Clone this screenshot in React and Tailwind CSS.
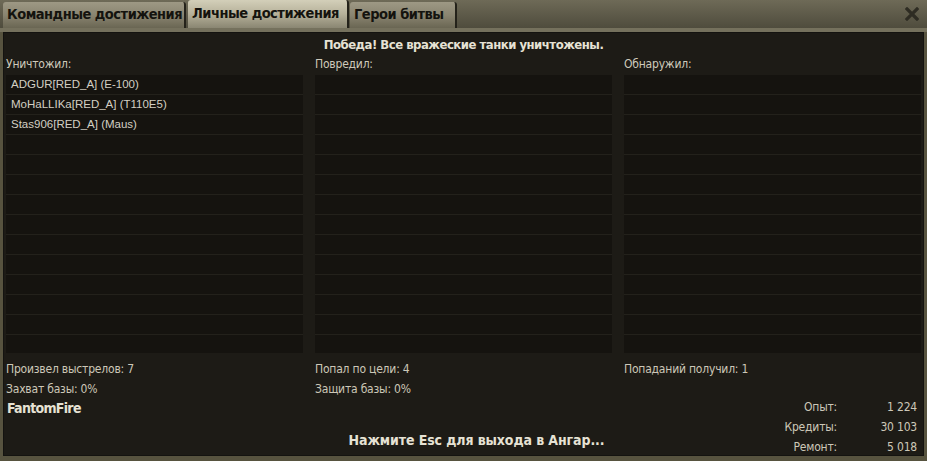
import React from "react";

const narrow = { fontFamily: '"Liberation Sans Narrow", "DejaVu Sans Condensed", "Roboto", sans-serif' };
const plain = { fontFamily: '"Liberation Sans", Arial, sans-serif' };

function ListBox({ items }) {
  const rows = Array.from({ length: 14 }, (_, i) => items[i] || "");
  return (
    <div className="h-[278px] shrink-0 overflow-hidden bg-[#14120e] flex flex-col">
      {rows.map((t, i) => (
        <div
          key={i}
          className="h-[20px] shrink-0 border-b border-[#23211b] bg-[#15130f] pl-[5px] text-[11.5px] leading-[19px] text-[#d3cfc3]"
          style={plain}
        >
          {t}
        </div>
      ))}
    </div>
  );
}

export default function App() {
  const tabBase =
    "shrink-0 px-[4px] flex items-center whitespace-nowrap text-[14.5px] tracking-[-0.5px] font-bold text-[#14130e] border-r-2 border-[#24221a] rounded-t-[3px]";
  const inactive = "h-[26px] bg-gradient-to-b from-[#9d9884] via-[#8a8571] to-[#6a6653]";
  return (
    <div className="w-[927px] h-[461px] bg-[#57533f] flex flex-col overflow-hidden" style={narrow}>
      {/* tab bar */}
      <div className="h-[28px] shrink-0 flex items-end bg-gradient-to-b from-[#6e6a57] to-[#4f4c3d] pl-[3px]">
        <div className={`${tabBase} ${inactive} w-[183px]`}>Командные достижения</div>
        <div className={`${tabBase} ml-[2px] w-[161px] h-[28px] bg-gradient-to-b from-[#d3cfb9] via-[#b6b19a] to-[#8a8672]`}>
          Личные достижения
        </div>
        <div className={`${tabBase} ${inactive} ml-[1px] w-[107px]`}>Герои битвы</div>
        <div className="flex-1" />
        <div className="self-center mr-[8px] mb-[1px]">
          <svg width="14" height="14" viewBox="0 0 14 14">
            <path d="M2 2 L12 12 M12 2 L2 12" stroke="#2e2c23" strokeWidth="3.2" strokeLinecap="square" />
          </svg>
        </div>
      </div>
      <div className="h-[4px] shrink-0 bg-[#75715d]" />
      {/* panel */}
      <div className="mx-[3px] mb-[5px] flex-1 min-h-0 bg-[#1d1b16] border border-[#141310] flex flex-col px-[2px]">
        <div className="h-[22px] shrink-0 flex items-center justify-center text-[13px] tracking-[-0.5px] font-bold text-[#e6e2d4] pt-[1px]">
          Победа! Все вражеские танки уничтожены.
        </div>
        <div className="grid grid-cols-3 gap-x-[12px] shrink-0">
          {[
            ["Уничтожил:", ["ADGUR[RED_A] (E-100)", "MoHaLLIKa[RED_A] (T110E5)", "Stas906[RED_A] (Maus)"]],
            ["Повредил:", []],
            ["Обнаружил:", []],
          ].map(([label, items]) => (
            <div key={label} className="flex flex-col">
              <div className="h-[20px] shrink-0 text-[12px] tracking-[-0.2px] leading-[18px] text-[#cfcabb]">{label}</div>
              <ListBox items={items} />
            </div>
          ))}
        </div>
        <div className="grid grid-cols-3 gap-x-[12px] mt-[6px] shrink-0 text-[12px] tracking-[-0.2px] text-[#cdc8b8]">
          <div className="flex flex-col">
            <div className="h-[20px] leading-[20px]">Произвел выстрелов: 7</div>
            <div className="h-[20px] leading-[20px]">Захват базы: 0%</div>
          </div>
          <div className="flex flex-col">
            <div className="h-[20px] leading-[20px]">Попал по цели: 4</div>
            <div className="h-[20px] leading-[20px]">Защита базы: 0%</div>
          </div>
          <div className="flex flex-col">
            <div className="h-[20px] leading-[20px]">Попаданий получил: 1</div>
          </div>
        </div>
        <div className="flex flex-1 min-h-0">
          <div className="w-[168px] text-[14px] tracking-[-0.7px] font-bold text-[#e6e2d4] leading-[18px] pl-[1px]">
            FantomFire
          </div>
          <div className="flex-1 flex items-end justify-center pb-[4px] text-[14px] tracking-[-0.1px] font-bold text-[#e6e2d4] whitespace-nowrap">
            Нажмите Esc для выхода в Ангар...
          </div>
          <div className="w-[142px] pr-[4px] -mt-[2px] text-[12px] tracking-[-0.2px] text-[#cdc8b8]">
            {[
              ["Опыт:", "1 224"],
              ["Кредиты:", "30 103"],
              ["Ремонт:", "5 018"],
            ].map(([l, v]) => (
              <div key={l} className="flex h-[20px] leading-[20px]">
                <div className="flex-1 text-right">{l}</div>
                <div className="w-[80px] text-right">{v}</div>
              </div>
            ))}
          </div>
        </div>
      </div>
    </div>
  );
}
